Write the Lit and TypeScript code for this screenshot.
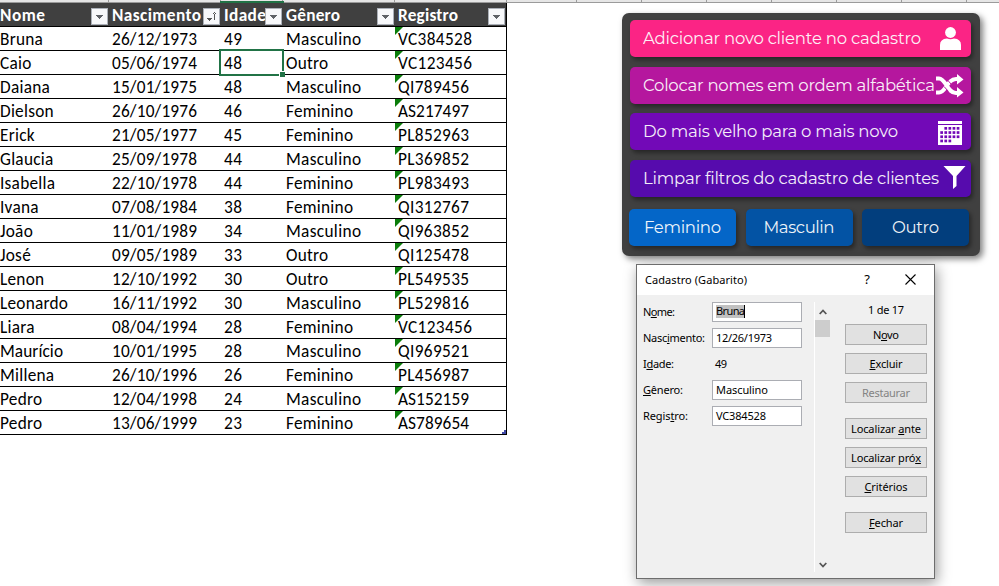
import { LitElement, html, css, svg } from "lit";
import { customElement, property } from "lit/decorators.js";
import { classMap } from "lit/directives/class-map.js";

type Row = [string, string, number, string, string];

const ROWS: Row[] = [
  ["Bruna", "26/12/1973", 49, "Masculino", "VC384528"],
  ["Caio", "05/06/1974", 48, "Outro", "VC123456"],
  ["Daiana", "15/01/1975", 48, "Masculino", "QI789456"],
  ["Dielson", "26/10/1976", 46, "Feminino", "AS217497"],
  ["Erick", "21/05/1977", 45, "Feminino", "PL852963"],
  ["Glaucia", "25/09/1978", 44, "Masculino", "PL369852"],
  ["Isabella", "22/10/1978", 44, "Feminino", "PL983493"],
  ["Ivana", "07/08/1984", 38, "Feminino", "QI312767"],
  ["João", "11/01/1989", 34, "Masculino", "QI963852"],
  ["José", "09/05/1989", 33, "Outro", "QI125478"],
  ["Lenon", "12/10/1992", 30, "Outro", "PL549535"],
  ["Leonardo", "16/11/1992", 30, "Masculino", "PL529816"],
  ["Liara", "08/04/1994", 28, "Feminino", "VC123456"],
  ["Maurício", "10/01/1995", 28, "Masculino", "QI969521"],
  ["Millena", "26/10/1996", 26, "Feminino", "PL456987"],
  ["Pedro", "12/04/1998", 24, "Masculino", "AS152159"],
  ["Pedro", "13/06/1999", 23, "Feminino", "AS789654"],
];

/** One line of text whose tracking is adjusted so it spans a given width. */
@customElement("fit-text")
export class FitText extends LitElement {
  @property({ type: Number }) span = 0;

  static styles = css`
    :host { display: inline-block; white-space: pre; }
  `;

  firstUpdated() {
    const count = (this.textContent ?? "").trim().length;
    const natural = this.getBoundingClientRect().width;
    if (this.span && count > 1) {
      const gap = (this.span - natural) / (count - 1);
      this.style.letterSpacing = `${gap}px`;
      this.style.marginRight = `${-gap}px`;
    }
  }

  render() {
    return html`<slot></slot>`;
  }
}

@customElement("client-sheet")
export class ClientSheet extends LitElement {
  static styles = css`
    :host { display: block; font-family: Carlito, Calibri, "Noto Sans", sans-serif; font-size: 17.3px; color: #000; }
    .strip { display: flex; height: 2px; background: #e6e6e6; border-bottom: 1px solid #9b9b9b; }
    .tick { box-sizing: border-box; flex: none; border-right: 1px solid #9b9b9b; height: 2px; }
    .c0 { width: 109px; } .c1 { width: 112px; } .c2 { width: 62px; } .c3 { width: 112px; }
    .c4 { width: 112px; } .c5 { width: 70px; } .c6 { width: 65px; }
    .c2.tick { position: relative; }
    .c2.tick::after { content: ""; position: absolute; left: -1px; top: 1px; width: 64px; height: 2px; background: #217346; }
    .table { width: 506px; border-right: 1px solid #000; position: relative; }
    .row { display: grid; grid-template-columns: 109px 112px 62px 112px 111px; height: 23px; border-bottom: 1px solid #000; }
    .cell { position: relative; display: flex; align-items: center; padding-left: 3px; white-space: pre; }
    .cell:first-child { padding-left: 0; }
    .cell fit-text { padding-top: 2px; }
    .first { letter-spacing: .25px; }
    .head { background: #404040; color: #fff; font-weight: 700; }
    .filter { position: absolute; right: 1px; top: 5px; display: block; }
    .flag { position: absolute; left: 0; top: 0; width: 8px; height: 8px; background: #0a7d0a; clip-path: polygon(0 0, 100% 0, 0 100%); }
    .row .selected::before { content: ""; position: absolute; left: -2px; top: -2px; right: -1px; bottom: -2px; border: 2px solid #217346; }
    .row .selected::after { content: ""; position: absolute; right: -2px; bottom: -3px; width: 5px; height: 5px; background: #217346; border: 1px solid #fff; border-width: 1px 0 0 1px; z-index: 1; }
    .grip { position: absolute; right: 0; bottom: 1px; display: block; }
  `;

  private filter(sorted: boolean) {
    return html`<svg class="filter" width="17" height="17" viewBox="0 0 17 17" shape-rendering="crispEdges">
      <rect x=".5" y=".5" width="16" height="16" fill="#f7f8fa" stroke="#abb0b8"></rect>
      ${sorted
        ? svg`<path d="M4 10h5v1h-1v1h-1v1h-1v-1h-1v-1h-1z" fill="#555"></path><path d="M12 4v8h-1v-8zM10 6h3v-1h-3z" fill="#555"></path>`
        : svg`<path d="M5 7h7v1h-1v1h-1v1h-1v1h-1v-1h-1v-1h-1v-1h-1z" fill="#5f6267"></path>`}
    </svg>`;
  }

  render() {
    const heads: [string, number][] = [["Nome", 45], ["Nascimento", 89], ["Idade", 42], ["Gênero", 54], ["Registro", 60]];
    const spans = [0, 85, 18, 0, 0];
    const nameSpans: Record<string, number> = { Leonardo: 70, "Maurício": 65 };
    return html`
      <div class="strip">${[0, 1, 2, 3, 4, 5, 6, 6, 6, 6, 6, 6].map((n) => html`<div class="tick c${n}"></div>`)}</div>
      <div class="table">
        <div class="row head">
          ${heads.map(([label, w], i) => html`<div class="cell"><fit-text span=${w}>${label}</fit-text>${this.filter(i === 1)}</div>`)}
        </div>
        ${ROWS.map(
          (row, r) => html`<div class="row">
            ${row.map((value, c) => {
              const span = c === 3 ? ({ Masculino: 75, Feminino: 67, Outro: 42 } as Record<string, number>)[value] : c === 4 ? (String(value)[0] === "V" ? 74 : 71) : c === 0 ? nameSpans[value] ?? 0 : spans[c];
              return html`<div class=${classMap({ cell: true, first: c === 0, selected: r === 1 && c === 2 })}>${c === 4 ? html`<span class="flag"></span>` : ""}<fit-text span=${span}>${value}</fit-text></div>`;
            })}
          </div>`
        )}
        <svg class="grip" width="4" height="4" shape-rendering="crispEdges"><path d="M0 2h2v-2h2v4h-4z" fill="#3f48a5"></path></svg>
      </div>
    `;
  }
}

@customElement("action-panel")
export class ActionPanel extends LitElement {
  static styles = css`
    :host { box-sizing: border-box; display: block; width: 358px; height: 243px; padding: 7px 8px 0; border-radius: 7px; background: #404040; box-shadow: 3px 3px 6px rgba(0, 0, 0, .5); font-family: Montserrat, Inter, sans-serif; font-size: 16.5px; font-weight: 400; color: #fff; }
    .actions { display: grid; grid-template-rows: 37px 37px 37px 37px; row-gap: 9.6px; }
    .button { box-sizing: border-box; display: flex; align-items: center; border-radius: 5px; box-shadow: 2px 3px 4px rgba(0, 0, 0, .4); }
    .button fit-text { opacity: .93; }
    .action { width: 341px; padding: 0 0 1px 13px; position: relative; }
    .icon { position: absolute; right: 6px; top: 4px; display: block; }
    .pink { background: #fb2485; } .magenta { background: #b5179e; } .violet { background: #7209b7; } .indigo { background: #560bad; }
    .filters { display: flex; gap: 9.5px; margin: 12px 0 0 -1px; }
    .choice { width: 107px; height: 37px; justify-content: center; }
    .blue { background: #0466c8; } .mid { background: #0353a4; } .navy { background: #023e7d; }
  `;

  render() {
    const person = svg`<circle cx="15.5" cy="8.5" r="5.4"></circle><path d="M5 26v-5q0-6 7-6.500q3.500 1.500 7 0q7 .5 7 6.500v5z"></path>`;
    const shuffle = svg`<path d="M1 7.500h3c7 0 8 14.500 17 14.500h2M1 21.500h3c7 0 8-13.500 17-13.500h2" fill="none" stroke="#fff" stroke-width="4"></path><path d="M12.500 9l4 4.500M9 15.500l4.500 5" stroke="#b5179e" stroke-width="1"></path><path d="M22 3l6.500 5.500l-6.500 5zM22 16l6.500 5.500l-6.500 5z"></path>`;
    const calendar = svg`<path d="M3 4h24v3h-24zM3 8h24v20h-24z"></path>${[0, 1, 2, 3].map((r) =>
      [0, 1, 2, 3, 4].map((c) => ((r === 0 && c === 0) || (r === 3 && c > 2) ? "" : svg`<rect x=${5.3 + c * 4.1} y=${10 + r * 4.2} width="2.700" height="2.700" fill="#7209b7"></rect>`))
    )}`;
    const funnel = svg`<path d="M8.500 2h22l-9 10v10l-3.500 3v-13z"></path>`;
    const actions: [string, string, number, unknown][] = [
      ["pink", "Adicionar novo cliente no cadastro", 278, person],
      ["magenta", "Colocar nomes em ordem alfabética", 292, shuffle],
      ["violet", "Do mais velho para o mais novo", 255, calendar],
      ["indigo", "Limpar filtros do cadastro de clientes", 296, funnel],
    ];
    const choices: [string, string, number][] = [["blue", "Feminino", 77], ["mid", "Masculin", 71], ["navy", "Outro", 47]];
    return html`
      <div class="actions">
        ${actions.map(([tone, label, w, icon]) => html`<div class="button action ${tone}"><fit-text span=${w}>${label}</fit-text><svg class="icon" width="30" height="30" viewBox="0 0 30 30" overflow="visible" fill="#fff">${icon}</svg></div>`)}
      </div>
      <div class="filters">
        ${choices.map(([tone, label, w]) => html`<div class="button choice ${tone}"><fit-text span=${w}>${label}</fit-text></div>`)}
      </div>
    `;
  }
}

@customElement("record-dialog")
export class RecordDialog extends LitElement {
  static styles = css`
    :host { box-sizing: border-box; display: block; width: 299px; height: 315px; border: 1px solid #6d6d6d; background: #f0f0f0; box-shadow: 2px 4px 13px rgba(0, 0, 0, .4); font-family: "Noto Sans", sans-serif; font-size: 11px; color: #000; }
    .title { box-sizing: border-box; height: 30px; padding-bottom: 2px; background: #fff; display: flex; align-items: center; padding-left: 8px; }
    .title .mark { margin-left: auto; font-size: 13px; }
    .close { margin: 0 18px 0 35px; }
    .content { display: grid; grid-template-columns: 177px 16px 104px; height: 283px; }
    .fields { padding: 7px 0 0 6px; display: flex; flex-direction: column; gap: 6px; }
    .field { display: grid; grid-template-columns: 69px 90px; height: 20px; align-items: center; }
    .field > fit-text { justify-self: start; padding-bottom: 2px; }
    .value { box-sizing: border-box; height: 20px; padding: 0 0 1px 3px; display: flex; align-items: center; border: 1px solid #abadb3; background: #fff; }
    .plain { border-color: transparent; background: none; padding-left: 2px; }
    .marked { background: #c1c1c1; border-right: 1px solid #000; height: 13px; line-height: 12px; }
    u { text-decoration: underline 1px; text-underline-offset: 1px; text-decoration-skip-ink: none; }
    .scroll { margin: 7px 0 6px; border-left: 1px solid #fff; display: flex; flex-direction: column; align-items: center; }
    .up { margin-top: 7px; } .thumb { width: 15px; height: 17px; background: #cdcdcd; margin-top: 5px; } .down { margin: auto 0 4px; }
    fit-text { line-height: 13px; }
    .side { padding: 8px 0 0 15px; width: 82px; }
    .count { text-align: center; height: 14px; line-height: 14px; margin-bottom: 7px; }
    .push { box-sizing: border-box; width: 82px; height: 21px; border: 1px solid #adadad; background: #e1e1e1; display: flex; align-items: center; justify-content: center; margin-bottom: 8px; white-space: pre; }
    .spaced { margin-top: 15px; }
    .off { color: #838383; }
  `;

  private label(text: string, key: number) {
    return key < 0 ? text : html`${text.slice(0, key)}<u>${text[key]}</u>${text.slice(key + 1)}`;
  }

  render() {
    const fields: [string, number, number, string, number][] = [
      ["Nome:", 1, 32, "Bruna", 30],
      ["Nascimento:", 4, 62, "12/26/1973", 56],
      ["Idade:", 1, 31, "49", 12],
      ["Gênero:", 0, 40, "Masculino", 52],
      ["Registro:", 5, 45, "VC384528", 50],
    ];
    const buttons: [string, number, number, string][] = [
      ["Novo", 1, 26, ""], ["Excluir", 0, 33, ""], ["Restaurar", -1, 48, "off"],
      ["Localizar ante", 10, 70, "spaced"], ["Localizar próx", 13, 70, ""], ["Critérios", 0, 43, ""], ["Fechar", 0, 34, "spaced"],
    ];
    return html`
      <div class="title"><fit-text span="102">Cadastro (Gabarito)</fit-text><span class="mark">?</span>
        <svg class="close" width="11" height="11" viewBox="0 0 11 11"><path d="M.5 .5l10 10M10.500 .5l-10 10" stroke="#000" stroke-width="1.100"></path></svg>
      </div>
      <div class="content">
        <div class="fields">
          ${fields.map(([name, key, w, value, vw], i) => html`<div class="field"><fit-text span=${w}>${this.label(name, key)}</fit-text><div class="value ${i === 2 ? "plain" : ""}"><fit-text class=${i === 0 ? "marked" : ""} span=${vw}>${value}</fit-text></div></div>`)}
        </div>
        <div class="scroll">
          <svg class="up" width="8" height="6" viewBox="0 0 8 6"><path d="M.700 5l3.300-3.500l3.300 3.500" fill="none" stroke="#555" stroke-width="1.800"></path></svg>
          <div class="thumb"></div>
          <svg class="down" width="8" height="6" viewBox="0 0 8 6"><path d="M.700 1l3.300 3.500l3.300-3.500" fill="none" stroke="#555" stroke-width="1.800"></path></svg>
        </div>
        <div class="side">
          <div class="count"><fit-text span="36">1 de 17</fit-text></div>
          ${buttons.map(([name, key, w, kind]) => html`<div class="push ${kind}"><fit-text span=${w}>${this.label(name, key)}</fit-text></div>`)}
        </div>
      </div>
    `;
  }
}

@customElement("app-root")
export class AppRoot extends LitElement {
  static styles = css`
    :host { display: block; position: relative; width: 999px; height: 586px; overflow: hidden; background: #fff; }
    .panel { position: absolute; left: 622px; top: 13px; }
    .dialog { position: absolute; left: 636px; top: 264px; }
  `;

  render() {
    return html`<client-sheet></client-sheet><action-panel class="panel"></action-panel><record-dialog class="dialog"></record-dialog>`;
  }
}
